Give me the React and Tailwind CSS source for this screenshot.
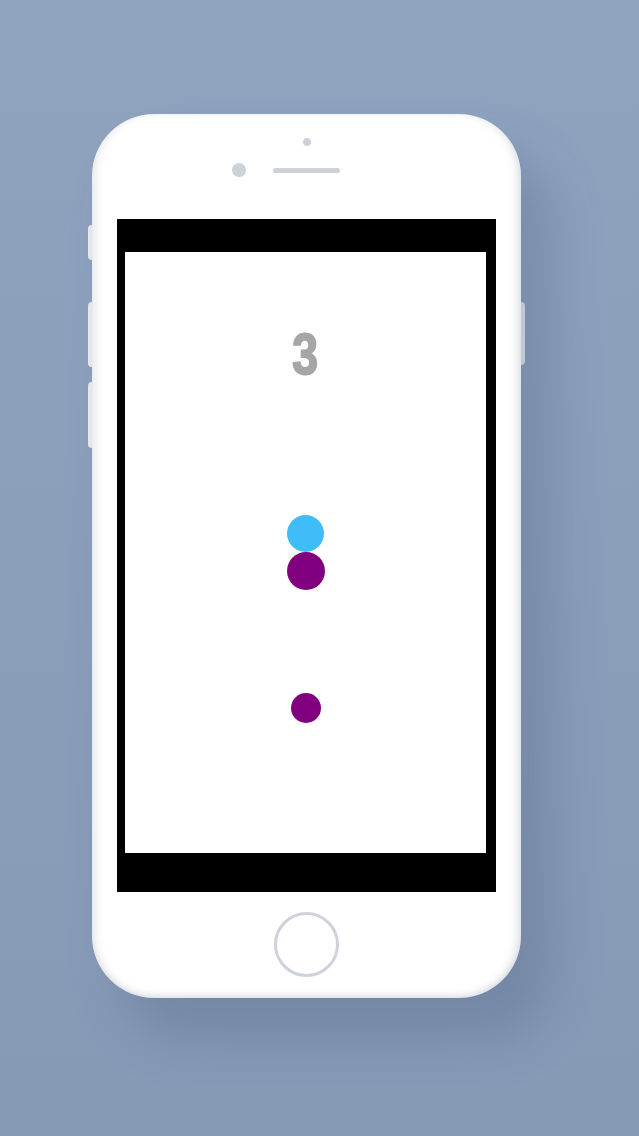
import React from "react";

const App = () => {
  return (
    <div className="w-[639px] h-[1136px] overflow-hidden bg-gradient-to-b from-[#8fa3bf] to-[#8699b5] pt-[114px] pl-[92px]">
      <Phone />
    </div>
  );
};

function Phone() {
  return (
    <div className="relative w-[429px] h-[884px]">
      {/* side buttons */}
      <div className="absolute -left-[4px] top-[111px] w-[5px] h-[35px] rounded-l-sm bg-[#e9ebef]" />
      <div className="absolute -left-[4px] top-[188px] w-[5px] h-[65px] rounded-l-sm bg-[#e9ebef]" />
      <div className="absolute -left-[4px] top-[268px] w-[5px] h-[66px] rounded-l-sm bg-[#e9ebef]" />
      <div className="absolute -right-[4px] top-[188px] w-[5px] h-[63px] rounded-r-sm bg-[#e9ebef]" />

      <div className="relative flex flex-col w-full h-full rounded-[62px] bg-white shadow-[inset_7px_0_10px_-4px_rgba(120,130,150,0.18),inset_-7px_0_10px_-4px_rgba(120,130,150,0.25),inset_0_-6px_10px_-4px_rgba(120,130,150,0.2),30px_40px_50px_rgba(70,90,125,0.28)]">
        {/* top: camera, sensor, speaker */}
        <div className="h-[105px] flex flex-col items-center">
          <div className="mt-[24px] w-[8px] h-[8px] rounded-full bg-[#cdd1da]" />
          <div className="mt-[17px] flex items-center w-full">
            <div className="ml-[140px] w-[14px] h-[14px] rounded-full bg-[#cdd1da]" />
            <div className="ml-[27px] w-[67px] h-[5px] rounded-full bg-[#cdd1da]" />
          </div>
        </div>

        {/* screen */}
        <div className="ml-[25px] w-[379px] h-[673px] bg-black pt-[33px] pl-[8px]">
          <div className="w-[361px] h-[601px] bg-white flex flex-col items-center">
            <div className="mt-[73px] h-[58px] text-[58px] leading-none font-bold text-[#a6a6a6] scale-x-[0.8] [-webkit-text-stroke:2px_#a6a6a6] font-['Liberation_Sans',Arial,sans-serif]">
              3
            </div>
            <div className="mt-[132px] w-[37px] h-[37px] rounded-full bg-[#3ebdf8]" />
            <div className="w-[38px] h-[38px] rounded-full bg-[#800080]" />
            <div className="mt-[103px] w-[30px] h-[30px] rounded-full bg-[#800080]" />
          </div>
        </div>

        {/* home button */}
        <div className="flex-1 flex items-center justify-center">
          <div className="w-[65px] h-[65px] rounded-full border-[3px] border-[#cdd2db] -mt-[2px]" />
        </div>
      </div>
    </div>
  );
}

export default App;
